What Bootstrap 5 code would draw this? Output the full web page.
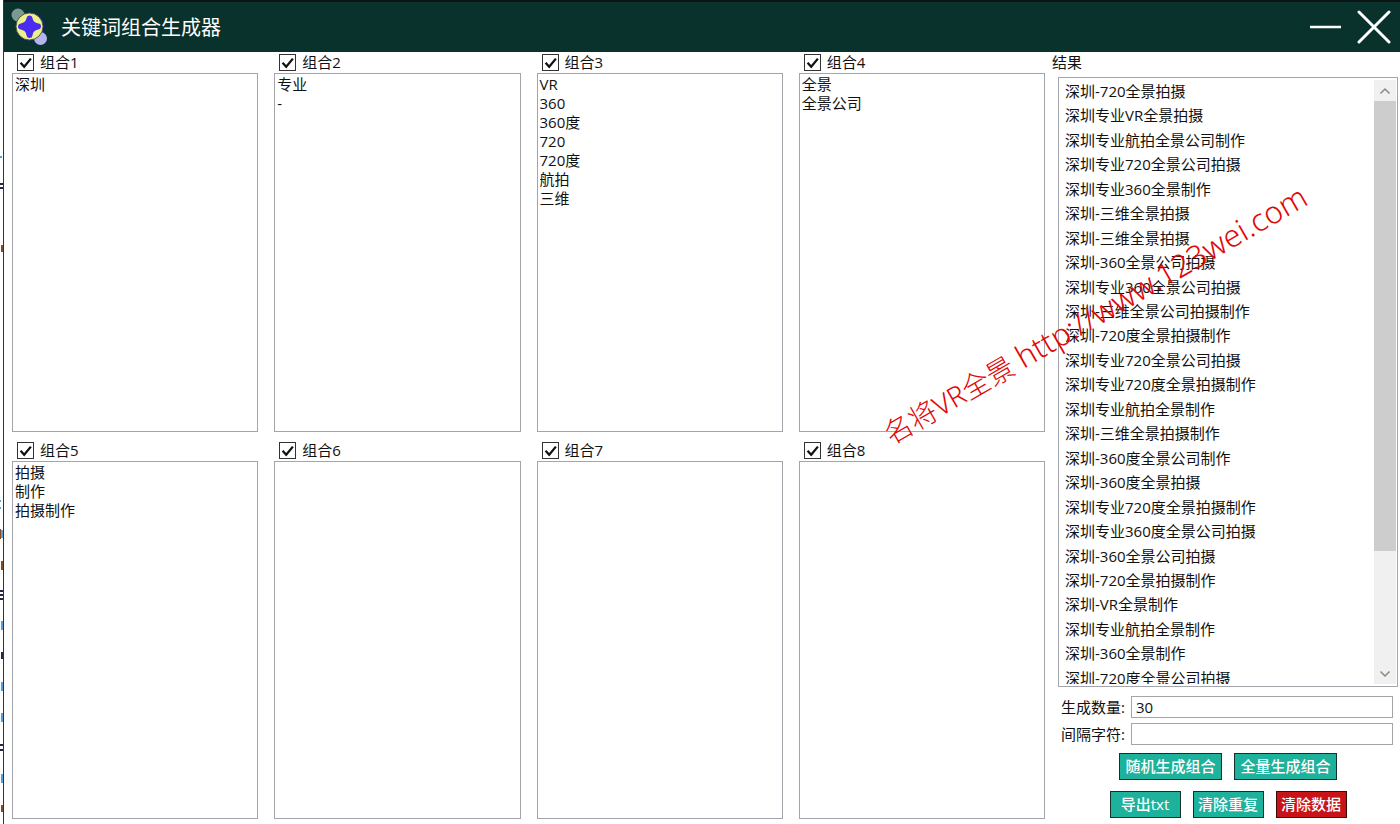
<!DOCTYPE html>
<html lang="zh-CN">
<head>
<meta charset="utf-8">
<meta name="viewport" content="width=device-width, initial-scale=1">
<title>关键词组合生成器</title>
<link href="https://cdn.jsdelivr.net/npm/bootstrap@5.3.0/dist/css/bootstrap.min.css" rel="stylesheet">
<style>
  body { font-family: "Open Sans", "Noto Sans CJK SC", sans-serif; font-size: 15px; line-height: 19px; color: #111; background: #fff; }
  .desk-edge { width: 3px; flex: none; }
  .app-window { border-left: 1px solid #333; min-width: 0; }
  .title-bar { height: 52px; background: #09322d; border-top: 2px solid #0b1514; color: #fff; padding: 0 9px 0 7px; }
  .title-bar h1 { font-size: 20px; line-height: 28px; font-weight: 400; margin: 2px 0 0 12px; }
  .win-btn { background: none; border: 0; padding: 0; line-height: 0; }
  .combos { display: grid; grid-template-columns: repeat(4, minmax(0, 1fr)); grid-template-rows: repeat(2, minmax(0, 1fr)); gap: 8px 16px; padding: 0 7px 5px 8px; }
  .combo-head { height: 21px; padding-left: 5px; gap: 6px; }
  .tick { appearance: none; width: 17px; height: 17px; margin: 0; border: 1px solid #333; background: #fff; flex: none; }
  .tick:checked { background: #fff url("data:image/svg+xml,%3Csvg xmlns='http://www.w3.org/2000/svg' viewBox='0 0 16 16'%3E%3Cpath d='M3 8l3.500 3.800L13 4' fill='none' stroke='%23111' stroke-width='2.200'/%3E%3C/svg%3E") center / 16px 16px no-repeat; }
  .word-box { resize: none; border: 1px solid #a3a5ab; border-radius: 0; padding: 1px 2px; color: #111; outline: 0; line-height: 19px; overflow: hidden; }
  .side { width: 348px; flex: none; padding: 0 2px 6px 0; }
  .side-inner { margin-left: 6px; min-height: 0; }
  .result-frame { border: 1px solid #a3a5ab; padding: 2px 1px; min-height: 0; margin-top: 4px; }
  .result-list { display: grid; grid-template-rows: repeat(25, 1fr); height: 101.2%; padding-left: 5px; }
  .result-list li { line-height: 22px; white-space: nowrap; }
  .scroll-col { width: 22px; background: #f0f0f0; }
  .scroll-col button { border: 0; padding: 0; height: 21px; background: #f0f0f0; line-height: 0; }
  .scroll-thumb { flex: 4; background: #cdcdcd; }
  .scroll-rest { flex: 1; }
  .fields { gap: 5px; padding: 9px 5px 0 3px; }
  .fields label { width: 70px; flex: none; }
  .fields input { height: 22px; border: 1px solid #a3a5ab; padding: 0 4px; min-width: 0; color: #111; }
  .actions { gap: 11px; padding-top: 8px; }
  .actions > div { gap: 12px; }
  .act { height: 27px; line-height: 25px; padding: 0; border: 1px solid #12302c; border-radius: 0; background: #1eb19b; color: #fff; font-size: 15px; font-weight: 500; width: 71px; }
  .act.wide { width: 103px; }
  .act.danger { background: #c81418; border-color: #3a0a0a; }
  .stamp { position: absolute; left: 64%; top: 50%; color: #e00808; font-family: "Noto Sans", "Noto Sans CJK SC", sans-serif; font-weight: 300; font-size: 28px; line-height: 40px; transform: rotate(-30deg); transform-origin: 0 100%; white-space: nowrap; pointer-events: none; }
  .stamp span { font-size: 31px; }
</style>
</head>
<body>
<div class="d-flex vh-100 overflow-hidden position-relative">
  <svg class="desk-edge h-100" aria-hidden="true">
    <g fill="#5aa0d8"><rect y="156" width="2" height="2"/><rect y="500" width="1" height="2"/><rect y="507" width="1" height="2"/><rect x="1" y="621" width="2" height="9"/><rect x="1" y="682" width="2" height="9"/><rect x="1" y="713" width="2" height="9"/><rect x="1" y="774" width="2" height="9"/><rect x="1" y="530" width="2" height="8"/></g>
    <g fill="#1f2a44"><rect y="183" width="3" height="2"/><rect y="187" width="3" height="2"/><rect y="590" width="3" height="2"/><rect y="594" width="3" height="2"/><rect y="598" width="3" height="2"/><rect x="1" y="652" width="2" height="7"/><rect y="744" width="3" height="2"/><rect y="749" width="3" height="2"/></g>
    <g fill="#8a4a20"><rect x="1" y="245" width="2" height="7"/><rect y="529" width="1" height="10"/><rect x="1" y="561" width="2" height="9"/><rect x="1" y="805" width="2" height="7"/></g>
  </svg>
  <div class="app-window flex-fill d-flex flex-column">
    <header class="title-bar d-flex align-items-center flex-shrink-0">
      <svg width="38" height="40" viewBox="11 7 38 40" aria-hidden="true">
        <circle cx="31" cy="27" r="15.500" fill="#0b2b4c"/>
        <circle cx="18" cy="15" r="6.500" fill="#7c9893"/>
        <circle cx="40.500" cy="38.500" r="6.500" fill="#b6b4f0"/>
        <circle cx="29.500" cy="26.500" r="13.500" fill="#eef08e" stroke="#4a5a40" stroke-width="1"/>
        <path d="M29.500 18.500Q30.500 25.500 38 26.500 30.500 27.500 29.500 35 28.500 27.500 21 26.500 28.500 25.500 29.500 18.500z" fill="#4a2cf0" stroke="#4a2cf0" stroke-width="6" stroke-linejoin="round"/>
      </svg>
      <h1>关键词组合生成器</h1>
      <div class="ms-auto d-flex align-items-center gap-3">
        <button class="win-btn" type="button" aria-label="最小化"><svg width="32" height="32"><path d="M1 16h31" stroke="#fff" stroke-width="2.500"/></svg></button>
        <button class="win-btn" type="button" aria-label="关闭"><svg width="34" height="34"><path d="M2 2l30 30M32 2L2 32" stroke="#fff" stroke-width="3" stroke-linecap="round"/></svg></button>
      </div>
    </header>
    <main class="d-flex flex-fill overflow-hidden">
      <section class="combos flex-fill">
        <div class="d-flex flex-column"><div class="combo-head d-flex align-items-center"><input class="tick" type="checkbox" id="c1" checked><label for="c1">组合1</label></div><textarea class="word-box flex-fill" aria-label="组合1" spellcheck="false">深圳</textarea></div>
        <div class="d-flex flex-column"><div class="combo-head d-flex align-items-center"><input class="tick" type="checkbox" id="c2" checked><label for="c2">组合2</label></div><textarea class="word-box flex-fill" aria-label="组合2" spellcheck="false">专业
-</textarea></div>
        <div class="d-flex flex-column"><div class="combo-head d-flex align-items-center"><input class="tick" type="checkbox" id="c3" checked><label for="c3">组合3</label></div><textarea class="word-box flex-fill" aria-label="组合3" spellcheck="false">VR
360
360度
720
720度
航拍
三维</textarea></div>
        <div class="d-flex flex-column"><div class="combo-head d-flex align-items-center"><input class="tick" type="checkbox" id="c4" checked><label for="c4">组合4</label></div><textarea class="word-box flex-fill" aria-label="组合4" spellcheck="false">全景
全景公司</textarea></div>
        <div class="d-flex flex-column"><div class="combo-head d-flex align-items-center"><input class="tick" type="checkbox" id="c5" checked><label for="c5">组合5</label></div><textarea class="word-box flex-fill" aria-label="组合5" spellcheck="false">拍摄
制作
拍摄制作</textarea></div>
        <div class="d-flex flex-column"><div class="combo-head d-flex align-items-center"><input class="tick" type="checkbox" id="c6" checked><label for="c6">组合6</label></div><textarea class="word-box flex-fill" aria-label="组合6"></textarea></div>
        <div class="d-flex flex-column"><div class="combo-head d-flex align-items-center"><input class="tick" type="checkbox" id="c7" checked><label for="c7">组合7</label></div><textarea class="word-box flex-fill" aria-label="组合7"></textarea></div>
        <div class="d-flex flex-column"><div class="combo-head d-flex align-items-center"><input class="tick" type="checkbox" id="c8" checked><label for="c8">组合8</label></div><textarea class="word-box flex-fill" aria-label="组合8"></textarea></div>
      </section>
      <aside class="side d-flex flex-column">
        <div class="combo-head d-flex align-items-center ps-0">结果</div>
        <div class="side-inner d-flex flex-column flex-fill">
          <div class="result-frame d-flex flex-fill">
            <div class="flex-fill overflow-hidden">
              <ul class="result-list list-unstyled mb-0">
                <li>深圳-720全景拍摄</li>
                <li>深圳专业VR全景拍摄</li>
                <li>深圳专业航拍全景公司制作</li>
                <li>深圳专业720全景公司拍摄</li>
                <li>深圳专业360全景制作</li>
                <li>深圳-三维全景拍摄</li>
                <li>深圳-三维全景拍摄</li>
                <li>深圳-360全景公司拍摄</li>
                <li>深圳专业360全景公司拍摄</li>
                <li>深圳-三维全景公司拍摄制作</li>
                <li>深圳-720度全景拍摄制作</li>
                <li>深圳专业720全景公司拍摄</li>
                <li>深圳专业720度全景拍摄制作</li>
                <li>深圳专业航拍全景制作</li>
                <li>深圳-三维全景拍摄制作</li>
                <li>深圳-360度全景公司制作</li>
                <li>深圳-360度全景拍摄</li>
                <li>深圳专业720度全景拍摄制作</li>
                <li>深圳专业360度全景公司拍摄</li>
                <li>深圳-360全景公司拍摄</li>
                <li>深圳-720全景拍摄制作</li>
                <li>深圳-VR全景制作</li>
                <li>深圳专业航拍全景制作</li>
                <li>深圳-360全景制作</li>
                <li>深圳-720度全景公司拍摄</li>
              </ul>
            </div>
            <div class="scroll-col d-flex flex-column">
              <button type="button" aria-label="向上滚动"><svg width="12" height="8"><path d="M1.500 6.500L6 2l4.500 4.500" fill="none" stroke="#888" stroke-width="1.500"/></svg></button>
              <div class="scroll-thumb"></div>
              <div class="scroll-rest"></div>
              <button type="button" aria-label="向下滚动"><svg width="12" height="8"><path d="M1.500 1.500L6 6l4.500-4.500" fill="none" stroke="#888" stroke-width="1.500"/></svg></button>
            </div>
          </div>
          <div class="fields d-flex flex-column">
            <div class="d-flex align-items-center"><label for="qty">生成数量:</label><input class="flex-fill" id="qty" type="text" value="30"></div>
            <div class="d-flex align-items-center"><label for="sep">间隔字符:</label><input class="flex-fill" id="sep" type="text"></div>
          </div>
          <div class="actions d-flex flex-column">
            <div class="d-flex justify-content-center"><button class="btn act wide" type="button">随机生成组合</button><button class="btn act wide" type="button">全量生成组合</button></div>
            <div class="d-flex justify-content-center"><button class="btn act" type="button">导出txt</button><button class="btn act" type="button">清除重复</button><button class="btn act danger" type="button">清除数据</button></div>
          </div>
        </div>
      </aside>
    </main>
  </div>
  <div class="stamp">名将VR全景 <span>http://www.123wei.com</span></div>
</div>
<script src="https://cdn.jsdelivr.net/npm/bootstrap@5.3.0/dist/js/bootstrap.bundle.min.js"></script>
</body>
</html>
